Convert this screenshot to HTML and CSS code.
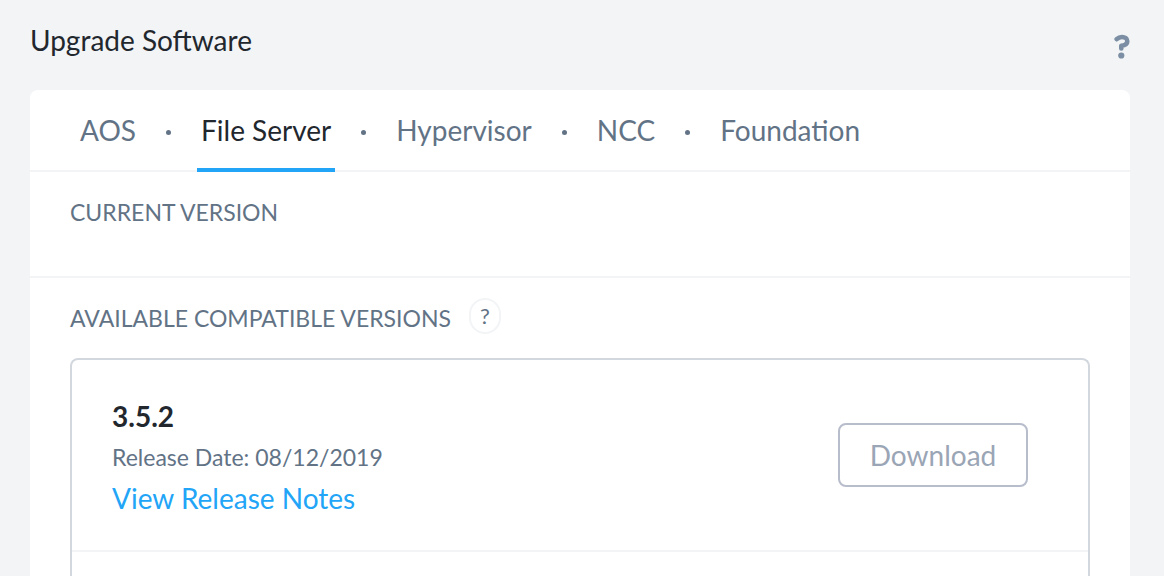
FILE: index.html
```html
<!DOCTYPE html>
<html lang="en">
<head>
<meta charset="utf-8">
<title>Upgrade Software</title>
<link rel="stylesheet" href="styles.css">
</head>
<body>
<header class="page-header">
  <h1 class="page-title">Upgrade Software</h1>
  <button class="help" type="button" aria-label="Help"><svg width="16" height="26" viewBox="0 0 16 26" fill="none" stroke="currentColor" stroke-linecap="round" stroke-linejoin="round"><path d="M2.700 5.200C4.200 3.700 6 3 8 3c3 0 5.300 1.500 5.300 4.200 0 3.600-3.300 4.200-6 4.600v2.700" stroke-width="4.600"/><circle cx="7.300" cy="21.500" r="3.100" fill="currentColor" stroke="none"/></svg></button>
</header>
<main class="panel">
  <nav class="tabs">
    <a class="tab" href="#aos">AOS</a><span class="dot"></span>
    <a class="tab active" href="#files" aria-current="page">File Server</a><span class="dot"></span>
    <a class="tab" href="#hypervisor">Hypervisor</a><span class="dot"></span>
    <a class="tab" href="#ncc">NCC</a><span class="dot"></span>
    <a class="tab" href="#foundation">Foundation</a>
  </nav>
  <section class="current">
    <h2 class="section-title">CURRENT VERSION</h2>
  </section>
  <section class="available">
    <div class="heading-row">
      <h2 class="section-title">AVAILABLE COMPATIBLE VERSIONS</h2>
      <button class="hint" type="button" aria-label="About compatible versions">?</button>
    </div>
    <div class="versions">
      <article class="version">
        <div class="details">
          <h3 class="number">3.5.2</h3>
          <p class="date">Release Date: 08/12/2019</p>
          <a class="notes" href="#notes">View Release Notes</a>
        </div>
        <button class="download" type="button">Download</button>
      </article>
    </div>
  </section>
</main>
</body>
</html>
```
FILE: styles.css
```css
* { box-sizing: border-box; }
body { display: flex; flex-direction: column; min-height: 100vh; margin: 0; background: #f2f4f6; color: #22272e; font-family: Lato, "Open Sans", sans-serif; }
h1, h2, h3, p { margin: 0; font-weight: 400; }
button { font-family: inherit; padding: 0; }
.page-header { display: flex; justify-content: space-between; align-items: flex-start; padding: 22px 34px 0 30px; height: 90px; }
.page-title { font-size: 28px; line-height: 36px; }
.help { display: flex; margin-top: 12px; padding: 0; border: 0; background: none; color: #7b8ea3; }
.panel { display: flex; flex-direction: column; flex: 1; margin: 0 34px 0 30px; background: #fff; border-radius: 8px 8px 0 0; }
.tabs { display: flex; height: 82px; padding-left: 46px; border-bottom: 2px solid #f2f4f6; }
.tab { height: 82px; padding: 0 4px; font-size: 28px; line-height: 80px; color: #627386; text-decoration: none; }
.tab.active { color: #22272e; border-bottom: 4px solid #22a5f7; }
.dot { width: 5px; height: 5px; margin: 4px 26px 0; align-self: center; border-radius: 50%; background: #627386; }
.current { height: 106px; padding: 24px 40px; border-bottom: 2px solid #f2f4f6; }
.section-title { font-size: 23px; line-height: 32px; color: #627386; }
.available { display: flex; flex-direction: column; flex: 1; padding: 20px 40px 0; }
.heading-row { display: flex; align-items: flex-end; gap: 18px; }
.hint { width: 32px; height: 36px; border: 2px solid #f2f4f6; border-radius: 16px; background: #fff; color: #627386; font-size: 22px; line-height: 32px; }
.versions { flex: 1; margin-top: 24px; border: 2px solid #d3d8df; border-bottom: 0; border-radius: 8px 8px 0 0; }
.version { display: flex; justify-content: space-between; align-items: center; min-height: 192px; padding: 0 60px 0 40px; border-bottom: 2px solid #f2f4f6; }
.details { padding-top: 4px; }
.number { font-size: 28px; line-height: 42px; font-weight: 700; }
.date { font-size: 23px; line-height: 41px; color: #627386; }
.notes { display: block; font-size: 28px; line-height: 41px; color: #22a5f7; text-decoration: none; }
.download { width: 190px; height: 64px; border: 2px solid #b8bdcc; border-radius: 8px; background: #fff; color: #9aa5b5; font-size: 28px; }
```
